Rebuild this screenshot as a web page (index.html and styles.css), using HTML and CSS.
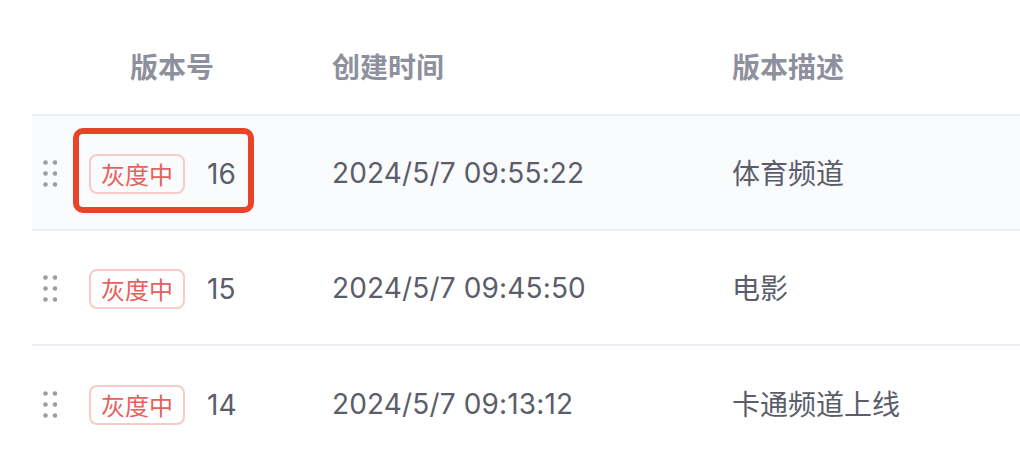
FILE: index.html
```html
<!DOCTYPE html>
<html lang="zh">
<head>
<meta charset="utf-8">
<title>版本列表</title>
<link rel="stylesheet" href="styles.css">
</head>
<body>
<div class="table">
  <div class="row head">
    <div class="c-ver">版本号</div>
    <div class="c-time">创建时间</div>
    <div class="c-desc">版本描述</div>
  </div>
  <div class="row item active">
    <svg class="grip" viewBox="0 0 14 28"><g fill="#9b9ca1"><circle cx="2.5" cy="2.5" r="2.3"/><circle cx="12" cy="2.5" r="2.3"/><circle cx="2.5" cy="13.5" r="2.3"/><circle cx="12" cy="13.5" r="2.3"/><circle cx="2.5" cy="24.5" r="2.3"/><circle cx="12" cy="24.5" r="2.3"/></g></svg>
    <div class="c-tag"><span class="tag">灰度中</span><span class="num">16</span></div>
    <div class="c-time">2024/5/7 09:55:22</div>
    <div class="c-desc">体育频道</div>
    <div class="mark"></div>
  </div>
  <div class="row item">
    <svg class="grip" viewBox="0 0 14 28"><g fill="#9b9ca1"><circle cx="2.5" cy="2.5" r="2.3"/><circle cx="12" cy="2.5" r="2.3"/><circle cx="2.5" cy="13.5" r="2.3"/><circle cx="12" cy="13.5" r="2.3"/><circle cx="2.5" cy="24.5" r="2.3"/><circle cx="12" cy="24.5" r="2.3"/></g></svg>
    <div class="c-tag"><span class="tag">灰度中</span><span class="num">15</span></div>
    <div class="c-time">2024/5/7 09:45:50</div>
    <div class="c-desc">电影</div>
  </div>
  <div class="row item last">
    <svg class="grip" viewBox="0 0 14 28"><g fill="#9b9ca1"><circle cx="2.5" cy="2.5" r="2.3"/><circle cx="12" cy="2.5" r="2.3"/><circle cx="2.5" cy="13.5" r="2.3"/><circle cx="12" cy="13.5" r="2.3"/><circle cx="2.5" cy="24.5" r="2.3"/><circle cx="12" cy="24.5" r="2.3"/></g></svg>
    <div class="c-tag"><span class="tag">灰度中</span><span class="num">14</span></div>
    <div class="c-time">2024/5/7 09:13:12</div>
    <div class="c-desc">卡通频道上线</div>
  </div>
</div>
</body>
</html>
```
FILE: styles.css
```css
html, body {
  margin: 0;
  padding: 0;
  background: #fff;
  overflow: hidden;
}
body {
  height: 450px;
  padding-left: 32px;
  box-sizing: border-box;
  font-family: Inter, "Noto Sans CJK SC", sans-serif;
  font-size: 28px;
  color: #5b5e6a;
}
.table {
  display: flex;
  flex-direction: column;
}
.row {
  position: relative;
  display: flex;
  align-items: center;
  border-bottom: 2px solid #eceef5;
  box-sizing: border-box;
  height: 115px;
}
.head {
  height: 116px;
  padding-top: 18px;
  font-weight: 600;
  color: #8e919d;
}
.head .c-ver {
  width: 300px;
  padding-left: 98px;
  box-sizing: border-box;
}
.c-time {
  width: 400px;
}
.item .c-time {
  letter-spacing: 0.15px;
  padding-bottom: 2px;
}
.c-desc {
  flex: 1;
}
.item .c-desc {
  padding-bottom: 4px;
}
.item {
  padding-left: 11px;
  padding-top: 2px;
}
.last {
  border-bottom: 0;
}
.active {
  background: #fafbfd;
}
.grip {
  width: 14px;
  height: 28px;
  flex: none;
}
.c-tag {
  width: 243px;
  margin-left: 32px;
  display: flex;
  align-items: center;
}
.tag {
  box-sizing: border-box;
  width: 96px;
  height: 40px;
  display: flex;
  align-items: center;
  justify-content: center;
  border: 2px solid #f6cbc9;
  border-radius: 8px;
  font-size: 24px;
  color: #e6605c;
}
.num {
  margin-left: 22px;
}
.mark {
  position: absolute;
  left: 41px;
  top: 12px;
  width: 181px;
  height: 85px;
  box-sizing: border-box;
  border: 6px solid #e94428;
  border-radius: 10px;
}
```
